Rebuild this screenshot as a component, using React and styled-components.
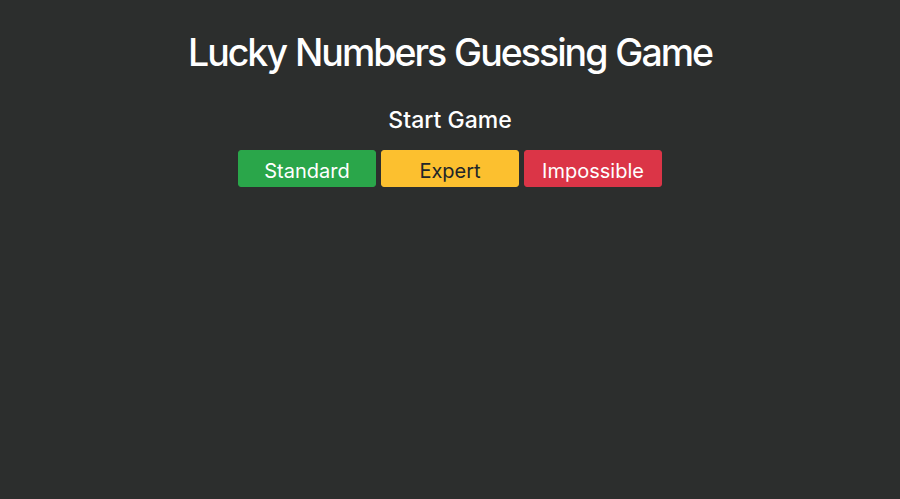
import React from 'react';
import styled, { createGlobalStyle } from 'styled-components';

const GlobalStyle = createGlobalStyle`
  html, body {
    margin: 0;
    padding: 0;
    background: #2c2e2d;
    font-family: Inter, "Liberation Sans", sans-serif;
    color: #fff;
  }
`;

const Page = styled.div`
  min-height: 499px;
  display: flex;
  flex-direction: column;
  align-items: center;
  padding-top: 30px;
  box-sizing: border-box;
`;

const Title = styled.h1`
  margin: 0;
  font-size: 37.5px;
  font-weight: 500;
  line-height: 46px;
  letter-spacing: -2px;
  word-spacing: 1px;
`;

const Subtitle = styled.h2`
  margin: 30px 0 0;
  font-size: 23px;
  font-weight: 500;
  line-height: 28px;
`;

const Buttons = styled.div`
  display: flex;
  gap: 5px;
  margin-top: 16px;
`;

const colors = {
  green: { bg: '#2aa64a', fg: '#fff' },
  yellow: { bg: '#fcc02f', fg: '#212529' },
  red: { bg: '#db3547', fg: '#fff' },
};

const Button = styled.button`
  width: 138px;
  height: 37px;
  border: 1px solid ${p => colors[p.$tone].bg};
  border-radius: 3px;
  background: ${p => colors[p.$tone].bg};
  color: ${p => colors[p.$tone].fg};
  font-family: inherit;
  font-size: 20px;
  font-weight: 400;
  padding: 4px 0 0;
  cursor: pointer;
`;

const App = () =>
  <Page>
    <GlobalStyle />
    <Title>Lucky Numbers Guessing Game</Title>
    <Subtitle>Start Game</Subtitle>
    <Buttons>
      <Button $tone="green">Standard</Button>
      <Button $tone="yellow">Expert</Button>
      <Button $tone="red">Impossible</Button>
    </Buttons>
  </Page>;

export default App;
